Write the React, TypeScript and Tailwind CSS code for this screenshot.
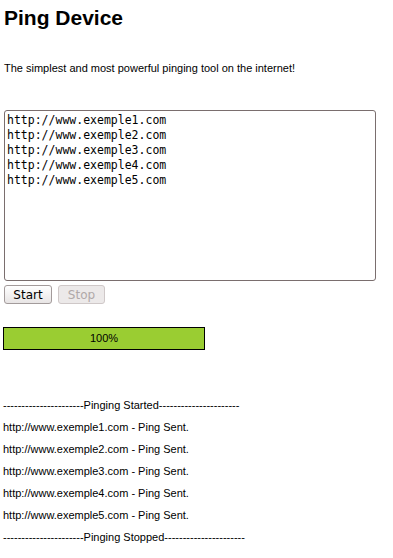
const urls = [
  'http://www.exemple1.com',
  'http://www.exemple2.com',
  'http://www.exemple3.com',
  'http://www.exemple4.com',
  'http://www.exemple5.com',
];

const dashes = '-'.repeat(22);

export default function App() {
  return (
    <div className="min-h-[558px] bg-white text-black px-1 pt-[5px]" style={{ fontFamily: '"Liberation Sans", Arial, sans-serif' }}>
      <h1 className="text-[21px] font-bold leading-[26px]">Ping Device</h1>

      <p className="text-[11px] leading-[13px] mt-[31px]">The simplest and most powerful pinging tool on the internet!</p>

      <textarea
        className="block mt-[35px] w-[372px] h-[171px] border border-[#7a6e6e] rounded-[3px] px-[2px] pt-[2px] text-[11.5px] leading-[15px] resize-none outline-none"
        style={{ fontFamily: '"DejaVu Sans Mono", monospace' }}
        readOnly
        defaultValue={urls.join('\n')}
      />

      <div className="flex gap-[6px] mt-[4px]" style={{ fontFamily: '"DejaVu Sans", sans-serif' }}>
        <button className="w-[48px] h-[19px] text-[12px] leading-none border border-[#a39b9b] rounded-[3px] bg-gradient-to-b from-white to-[#e8e5e5] text-black">
          Start
        </button>
        <button disabled className="w-[47px] h-[19px] text-[12px] leading-none border border-[#cfc8c8] rounded-[3px] bg-[#ece9e9] text-[#b0a8a8]">
          Stop
        </button>
      </div>

      <div className="mt-[23px] -ml-[1px] w-[202px] h-[23px] border border-black bg-[#9acd32] flex items-center justify-center text-[11px]">
        100%
      </div>

      <div className="mt-[44px] -ml-[1px] text-[11px] leading-[22px]">
        <div>{dashes}Pinging Started{dashes}</div>
        {urls.map((u) => (
          <div key={u}>{u} - Ping Sent.</div>
        ))}
        <div>{dashes}Pinging Stopped{dashes}</div>
      </div>
    </div>
  );
}
